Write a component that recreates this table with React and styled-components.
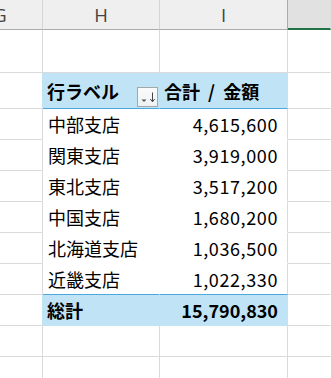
import React from 'react';
import styled, { createGlobalStyle } from 'styled-components';

const GRID = '#dadada';
const PIVOT_BG = '#c0e4f5';
const PIVOT_LINE = '#4aa8dc';

const rows = [
  { label: '中部支店', amount: '4,615,600' },
  { label: '関東支店', amount: '3,919,000' },
  { label: '東北支店', amount: '3,517,200' },
  { label: '中国支店', amount: '1,680,200' },
  { label: '北海道支店', amount: '1,036,500' },
  { label: '近畿支店', amount: '1,022,330' },
];

const GlobalStyle = createGlobalStyle`
  html, body {
    margin: 0;
    padding: 0;
    background: #ffffff;
  }
  body {
    font-family: "Noto Sans CJK JP", "Noto Sans", sans-serif;
  }
`;

const Sheet = () => {
  return (
    <Wrapper>
      <GlobalStyle />
      <HeaderRow>
        <ColHead $first>G</ColHead>
        <ColHead>H</ColHead>
        <ColHead $dark>I</ColHead>
        <ColHead $selected />
      </HeaderRow>

      <Row $height={43}>
        <Cell $w={43} />
        <Cell $w={117} />
        <Cell $w={128} />
        <Cell $grow $noRight />
      </Row>

      {/* pivot header */}
      <Row $height={36}>
        <Cell $w={43} $rightColor={PIVOT_BG} />
        <Cell $w={117} $tone="head">
          <Label $bold>行ラベル</Label>
          <FilterButton>
            <svg width="19" height="18" viewBox="0 0 19 18">
              <path d="M3.5 11.5 L8.5 11.5 L6 14 Z" fill="#555" />
              <line x1="14.5" y1="4.5" x2="14.5" y2="13.5" stroke="#444" strokeWidth="1" />
              <path d="M12.3 11 L14.5 13.8 L16.7 11" fill="none" stroke="#444" strokeWidth="1" />
            </svg>
          </FilterButton>
        </Cell>
        <Cell $w={128} $tone="head">
          <Label $bold $wide>合計 / 金額</Label>
        </Cell>
        <Cell $grow $noRight />
      </Row>

      {rows.map((r, i) => (
        <Row key={r.label} $height={31}>
          <Cell $w={43} />
          <Cell $w={117} $tone="body" $last={i === rows.length - 1} $rightColor="#ffffff">
            <Label>{r.label}</Label>
          </Cell>
          <Cell $w={128} $tone="body" $last={i === rows.length - 1} $right>
            <Amount>{r.amount}</Amount>
          </Cell>
          <Cell $grow $noRight />
        </Row>
      ))}

      {/* grand total */}
      <Row $height={31}>
        <Cell $w={43} $rightColor={PIVOT_BG} />
        <Cell $w={117} $tone="total">
          <Label $bold>総計</Label>
        </Cell>
        <Cell $w={128} $tone="total" $right>
          <Amount $bold>15,790,830</Amount>
        </Cell>
        <Cell $grow $noRight />
      </Row>

      <Row $height={31}>
        <Cell $w={43} />
        <Cell $w={117} />
        <Cell $w={128} />
        <Cell $grow $noRight />
      </Row>
      <Row $height={31}>
        <Cell $w={43} />
        <Cell $w={117} />
        <Cell $w={128} />
        <Cell $grow $noRight />
      </Row>
    </Wrapper>
  );
};

export default function App() {
  return <Sheet />;
}

const Wrapper = styled.div`
  width: 331px;
  height: 378px;
  overflow: hidden;
  background: #ffffff;
`;

const HeaderRow = styled.div`
  display: flex;
  height: 30px;
`;

const ColHead = styled.div`
  box-sizing: border-box;
  display: flex;
  align-items: center;
  justify-content: center;
  height: 30px;
  flex: ${(p) => (p.$selected ? '1 1 auto' : 'none')};
  width: ${(p) => (p.$first ? '85px' : p.$dark ? '128px' : p.$selected ? 'auto' : '117px')};
  margin-left: ${(p) => (p.$first ? '-42px' : '0')};
  background: ${(p) => (p.$selected ? '#e1e1e1' : '#efefef')};
  border-right: 1px solid ${(p) => (p.$dark ? '#ababab' : p.$selected ? 'transparent' : '#d4d4d4')};
  border-bottom: ${(p) => (p.$selected ? '2px solid #217346' : '1px solid #ababab')};
  font-family: "Open Sans", "Liberation Sans", sans-serif;
  font-size: 18.5px;
  color: #444444;
  padding-bottom: 1px;
`;

const Row = styled.div`
  display: flex;
  height: ${(p) => p.$height}px;
`;

const toneBg = {
  head: PIVOT_BG,
  total: PIVOT_BG,
  body: '#ffffff',
};

const Cell = styled.div`
  box-sizing: border-box;
  position: relative;
  display: flex;
  align-items: center;
  justify-content: ${(p) => (p.$right ? 'flex-end' : 'flex-start')};
  width: ${(p) => (p.$grow ? 'auto' : `${p.$w}px`)};
  flex: ${(p) => (p.$grow ? '1 1 auto' : 'none')};
  height: 100%;
  padding: ${(p) => (p.$right ? '0 9px 0 4px' : '0 0 0 4px')};
  background: ${(p) => (p.$tone ? toneBg[p.$tone] : '#ffffff')};
  border-right: 1px solid
    ${(p) =>
      p.$noRight
        ? 'transparent'
        : p.$rightColor
        ? p.$rightColor
        : p.$tone === 'head' || p.$tone === 'total'
        ? PIVOT_BG
        : GRID};
  border-bottom: 1px solid
    ${(p) => {
      if (p.$tone === 'head') return PIVOT_LINE;
      if (p.$tone === 'total') return PIVOT_BG;
      if (p.$tone === 'body') return p.$last ? PIVOT_LINE : '#ffffff';
      return GRID;
    }};
`;

const Label = styled.span`
  font-size: 18px;
  font-weight: ${(p) => (p.$bold ? 700 : 400)};
  word-spacing: ${(p) => (p.$wide ? '4px' : 'normal')};
  color: #000000;
  white-space: nowrap;
  line-height: 1;
  margin-left: ${(p) => (p.$bold ? '0' : '1px')};
`;

const Amount = styled.span`
  font-size: 18px;
  font-weight: ${(p) => (p.$bold ? 700 : 400)};
  color: #000000;
  letter-spacing: ${(p) => (p.$bold ? '0' : '0.6px')};
  line-height: 1;
  white-space: nowrap;
`;

const FilterButton = styled.div`
  position: absolute;
  right: 1px;
  bottom: 1px;
  box-sizing: border-box;
  width: 21px;
  height: 20px;
  border: 1px solid #a6a6a6;
  background: linear-gradient(#fbfbfb, #eef1f4);
  display: flex;
  align-items: center;
  justify-content: center;
`;
